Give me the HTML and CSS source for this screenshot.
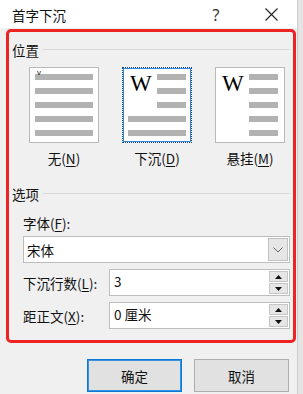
FILE: index.html
```html
<!DOCTYPE html>
<html lang="zh-CN">
<head>
<meta charset="utf-8">
<title>首字下沉</title>
<link rel="stylesheet" href="styles.css">
</head>
<body>
<div class="dialog">
  <div class="titlebar">
    <span class="title">首字下沉</span>
    <span class="help">?</span>
    <svg class="close" width="13" height="13" viewBox="0 0 13 13"><path d="M0.5 0.5 L12.5 12.5 M12.5 0.5 L0.5 12.5" stroke="#222" stroke-width="1.1" fill="none"/></svg>
  </div>
  <div class="panel">
    <div class="group-head"><span>位置</span></div>
    <div class="previews">
      <div class="option">
        <div class="pbox plain">
          <span class="caret">v</span>
          <i class="ln"></i><i class="ln"></i><i class="ln"></i><i class="ln"></i><i class="ln"></i>
        </div>
        <div class="olabel">无(<u>N</u>)</div>
      </div>
      <div class="option">
        <div class="pbox drop selected">
          <div class="prow">
            <span class="w">W</span>
            <div class="short"><i class="ln"></i><i class="ln"></i><i class="ln"></i></div>
          </div>
          <i class="ln"></i><i class="ln"></i>
        </div>
        <div class="olabel">下沉(<u>D</u>)</div>
      </div>
      <div class="option">
        <div class="pbox hang">
          <div class="prow">
            <span class="w">W</span>
            <div class="short"><i class="ln"></i><i class="ln"></i><i class="ln"></i><i class="ln"></i><i class="ln"></i></div>
          </div>
        </div>
        <div class="olabel">悬挂(<u>M</u>)</div>
      </div>
    </div>
    <div class="group-head opts"><span>选项</span></div>
    <div class="flabel">字体(<u>F</u>):</div>
    <div class="select">
      <span class="val">宋体</span>
      <span class="ddbtn"><svg width="10" height="6" viewBox="0 0 10 6"><path d="M0.5 0.5 L5 5 L9.5 0.5" stroke="#666" stroke-width="1" fill="none"/></svg></span>
    </div>
    <div class="frow">
      <span class="rlabel">下沉行数(<u>L</u>):</span>
      <div class="spin">
        <span class="val">3</span>
        <div class="sbtns">
          <span class="sbtn"><svg width="7" height="4" viewBox="0 0 7 4"><path d="M0 4 L3.5 0 L7 4 Z" fill="#111"/></svg></span>
          <span class="sbtn"><svg width="7" height="4" viewBox="0 0 7 4"><path d="M0 0 L3.5 4 L7 0 Z" fill="#111"/></svg></span>
        </div>
      </div>
    </div>
    <div class="frow">
      <span class="rlabel">距正文(<u>X</u>):</span>
      <div class="spin">
        <span class="val">0 厘米</span>
        <div class="sbtns">
          <span class="sbtn"><svg width="7" height="4" viewBox="0 0 7 4"><path d="M0 4 L3.5 0 L7 4 Z" fill="#111"/></svg></span>
          <span class="sbtn"><svg width="7" height="4" viewBox="0 0 7 4"><path d="M0 0 L3.5 4 L7 0 Z" fill="#111"/></svg></span>
        </div>
      </div>
    </div>
  </div>
  <div class="buttons">
    <button class="btn primary">确定</button>
    <button class="btn">取消</button>
  </div>
</div>
</body>
</html>
```
FILE: styles.css
```css
* { box-sizing: border-box; }
html, body { margin: 0; padding: 0; }
body {
  width: 303px;
  height: 394px;
  overflow: hidden;
  background: #e4e4e4;
  font-family: "Noto Sans CJK SC", "Noto Sans", sans-serif;
  font-size: 13.5px;
  color: #111;
}
.dialog {
  width: 298px;
  height: 394px;
  background: #f0f0f0;
  border-right: 1px solid #cdcdcd;
}
.titlebar {
  height: 28px;
  background: #fff;
  display: flex;
  align-items: center;
  padding: 1px 0 0 12px;
}
.title { flex: 1; font-size: 13.5px; line-height: 18px; color: #111; }
.help {
  width: 12px;
  text-align: center;
  font-size: 16px;
  line-height: 18px;
  color: #333;
  margin-right: 43px;
  font-family: "Noto Sans", sans-serif;
}
.close { margin-right: 19px; margin-top: -1px; }
.panel {
  margin: 1px 0 0 6px;
  width: 290px;
  height: 314px;
  border: 3px solid #ee2323;
  border-radius: 5px;
  padding-top: 9px;
}
.group-head {
  display: flex;
  align-items: center;
  height: 18px;
  line-height: 18px;
  margin: 0 3px 0 3px;
}
.group-head::after {
  content: "";
  flex: 1;
  height: 1px;
  background: #d9d9d9;
  margin-left: 4px;
  margin-top: -1px;
}
.previews {
  display: flex;
  gap: 23px;
  padding-left: 20px;
  margin-top: 8px;
}
.option {
  width: 70px;
  display: flex;
  flex-direction: column;
  align-items: center;
}
.pbox {
  width: 70px;
  height: 76px;
  background: #fff;
  border: 1px solid #b9b9b9;
  padding: 6px 5px 0 5px;
  display: flex;
  flex-direction: column;
  gap: 8px;
  position: relative;
}
.ln {
  display: block;
  height: 6px;
  background: #b2b2b2;
}
.caret {
  position: absolute;
  left: 7px;
  top: 1px;
  font-size: 8px;
  line-height: 8px;
  color: #222;
  font-family: "Liberation Sans", sans-serif;
}
.prow { display: flex; justify-content: space-between; }
.short {
  width: 29px;
  display: flex;
  flex-direction: column;
  gap: 8px;
}
.w {
  font-family: "Liberation Serif", serif;
  font-size: 23px;
  line-height: 18px;
  color: #000;
  margin-left: 2px;
  margin-top: 1px;
}
.selected {
  border: 1px dotted #1b3f73;
  box-shadow: inset 0 0 0 1px #2f86dc;
}
.hang { padding-right: 6px; }
.hang .w { margin-left: 1px; }
.olabel {
  margin-top: 6px;
  line-height: 18px;
  height: 18px;
  white-space: nowrap;
  color: #111;
}
u { text-decoration-thickness: 1px; text-underline-offset: 2px; }
.opts { margin-top: 18px; }
.flabel {
  margin: 11px 0 0 14px;
  line-height: 18px;
  height: 18px;
}
.select {
  margin: 4px 0 0 14px;
  width: 267px;
  height: 27px;
  background: #fff;
  border: 1px solid #bdbdbd;
  display: flex;
  align-items: center;
  padding: 1px 0 1px 2px;
}
.val { flex: 1; line-height: 18px; padding-left: 1px; }
.ddbtn {
  width: 20px;
  height: 23px;
  margin-right: 1px;
  background: #e6e6e6;
  border: 1px solid #c2c2c2;
  display: flex;
  align-items: center;
  justify-content: center;
}
.frow {
  display: flex;
  align-items: center;
  margin: 6px 0 0 14px;
  height: 27px;
}
.rlabel { width: 86px; line-height: 18px; white-space: nowrap; margin-top: 1px; }
.spin {
  width: 181px;
  height: 27px;
  background: #fff;
  border: 1px solid #bdbdbd;
  display: flex;
  align-items: flex-start;
  padding: 1px 1px 1px 3px;
}
.spin .val { margin-top: 1px; }
.sbtns {
  display: flex;
  flex-direction: column;
  gap: 1px;
  width: 19px;
}
.sbtn {
  height: 11px;
  background: #e6e6e6;
  border: 1px solid #c6c6c6;
  display: flex;
  align-items: center;
  justify-content: center;
}
.buttons {
  display: flex;
  justify-content: flex-end;
  gap: 12px;
  padding-right: 8px;
  margin-top: 16px;
}
.btn {
  width: 95px;
  height: 33px;
  background: #e1e1e1;
  border: 1px solid #adadad;
  font-family: "Noto Sans CJK SC", sans-serif;
  font-size: 13.5px;
  color: #111;
  padding: 0;
}
.primary {
  border: 1px solid #0a78d6;
  box-shadow: inset 0 0 0 1px #3a91dd;
}
```
